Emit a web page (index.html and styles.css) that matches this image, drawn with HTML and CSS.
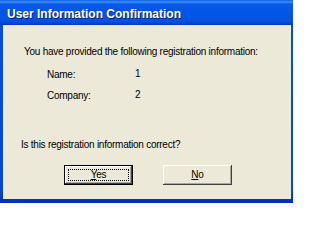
FILE: index.html
```html
<!DOCTYPE html>
<html>
<head>
<meta charset="utf-8">
<link rel="stylesheet" href="styles.css">
</head>
<body>
<div class="window">
  <div class="titlebar"><span class="title">User Information Confirmation</span></div>
  <div class="client">
    <p class="intro">You have provided the following registration information:</p>
    <div class="fields">
      <span class="label">Name:</span><span class="value">1</span>
      <span class="label">Company:</span><span class="value">2</span>
    </div>
    <p class="question">Is this registration information correct?</p>
    <div class="buttons">
      <button class="btn default"><span class="focus"><u>Y</u>es</span></button>
      <button class="btn"><span><u>N</u>o</span></button>
    </div>
  </div>
</div>
</body>
</html>
```
FILE: styles.css
```css
html, body {
  margin: 0;
  padding: 0;
  width: 293px;
  height: 203px;
  overflow: hidden;
}
.window {
  width: 293px;
  height: 203px;
  box-sizing: border-box;
  display: flex;
  flex-direction: column;
  background: linear-gradient(to bottom, #0050e0 0, #0048d8 190px, #0030b8 203px);
  font-family: "Liberation Sans", Arial, sans-serif;
}
.titlebar {
  height: 25px;
  flex: none;
  display: flex;
  align-items: center;
  padding-left: 7px;
  background: linear-gradient(to bottom, #0a5fe8 0, #3d8df6 2px, #0a5ae8 4px, #0256e6 12px, #0453e2 20px, #0047d8 23px, #0036c0 25px);
}
.title {
  color: #ffffff;
  font-weight: bold;
  font-size: 12px;
  text-shadow: 1px 1px 0 #0a1f80;
  white-space: nowrap;
  margin-top: 2px;
}
.client {
  flex: 1;
  margin: 0 2px 4px 3px;
  background: #ece9d8;
  padding: 21px 0 0 18px;
  font-size: 10px;
  line-height: 12px;
  letter-spacing: -0.25px;
  color: #000;
}
.intro {
  margin: 0;
  padding-left: 3px;
}
.fields {
  display: grid;
  grid-template-columns: 88px auto;
  row-gap: 9px;
  margin: 11px 0 0 26px;
}
.value {
  position: relative;
  top: -1px;
}
.question {
  margin: 37px 0 0 0;
}
.buttons {
  display: flex;
  gap: 30px;
  margin: 14px 0 0 43px;
}
.btn {
  width: 69px;
  height: 20px;
  padding: 0;
  margin: 0;
  box-sizing: border-box;
  background: #ece9d8;
  border: none;
  font: inherit;
  letter-spacing: inherit;
  color: #000;
  box-shadow: inset -1px -1px 0 #404040, inset 1px 1px 0 #ffffff, inset -2px -2px 0 #aca899;
  display: flex;
  align-items: center;
  justify-content: center;
}
.btn.default {
  border: 1px solid #000;
}
.focus {
  display: block;
  width: 61px;
  height: 12px;
  line-height: 10px;
  border: 1px dotted #000;
  box-sizing: border-box;
}
```
